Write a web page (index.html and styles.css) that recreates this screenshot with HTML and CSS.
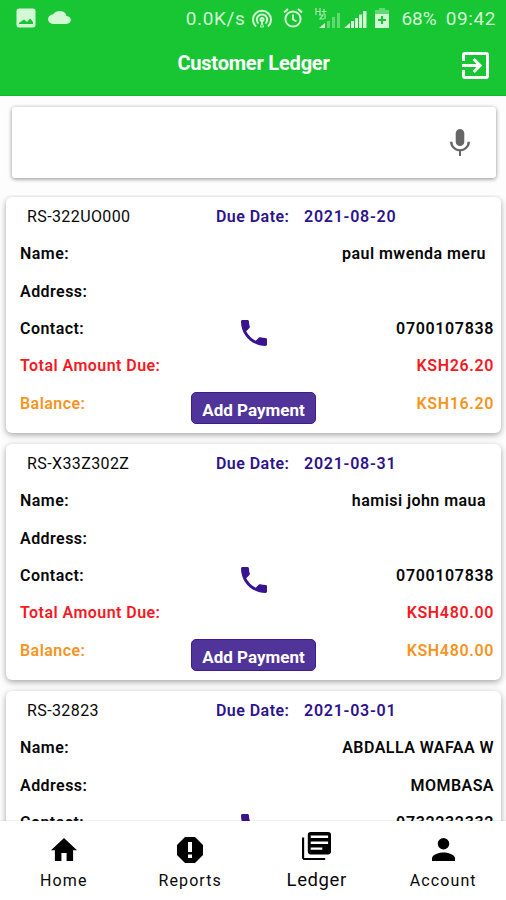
FILE: index.html
```html
<!DOCTYPE html>
<html lang="en">
<head>
    <meta charset="UTF-8">
    <meta name="viewport" content="width=device-width, initial-scale=1.0">
    <title>Customer Ledger</title>
    <link rel="stylesheet" href="styles.css">
</head>
<body>
    <header>
        <div class="status-bar">
            <svg class="picture" width="20" height="20" viewBox="0 0 20 20"><path fill-rule="evenodd" d="M3 .5h14a2.500 2.500 0 0 1 2.500 2.500v14a2.500 2.500 0 0 1-2.500 2.500H3A2.500 2.500 0 0 1 .5 17V3A2.500 2.500 0 0 1 3 .5zM3 16h14v-2l-3-3.500-3 3.500-3-2.500L3 15z"/></svg>
            <svg class="cloud" width="23" height="13" viewBox="0 0 24 16" preserveAspectRatio="none"><path d="M19.350 6.040A7.490 7.490 0 0 0 12 0C9.110 0 6.600 1.640 5.350 4.040A6 6 0 0 0 6 16h13a5 5 0 0 0 .35-9.960z"/></svg>
            <span class="speed">0.0K/s</span>
            <svg class="hotspot" width="22" height="20" viewBox="0 0 22 20" fill="none" stroke="#d2f8d4" stroke-width="2"><path d="M5 17.500a9 9 0 1 1 12 0M7.500 14.500a5.200 5.200 0 1 1 7 0"/><circle cx="11" cy="10.500" r="1.500"/><path d="M9.500 18l1.500-5 1.500 5z" stroke-width="1"/></svg>
            <svg class="alarm" width="20" height="20" viewBox="0 0 20 20" fill="none" stroke="#d2f8d4" stroke-width="2"><circle cx="10" cy="11" r="7.600"/><path d="M10 6.500v5l3.500 2M1 4.500L5 1M19 4.500L15 1"/></svg>
            <svg class="signal" width="52" height="22" viewBox="0 0 52 22">
                <path d="M1 1v7M5 1v7M1 4.500h4M6.500 4.500h5M9 2v5M4 8h4l-3 4h4M10 7v5" fill="none" stroke="#a5edaa" stroke-width="1.200"/>
                <path d="M4 21l6-5v5z"/>
                <path class="dim" d="M12 14h3v7h-3zM17 10h3v11h-3zM22 6h3v15h-3z"/>
                <path d="M29 21l6-5v5zM36 14h3v7h-3zM40 11h3v10h-3zM44 7.500h3V21h-3zM48 4h3.500v17H48z"/>
            </svg>
            <svg class="battery" width="14" height="20" viewBox="0 0 14 20"><path class="dim" d="M4 0h6v2h4v5H0V2h4z"/><path fill-rule="evenodd" d="M0 6h14v14H0zM6 8v3H3v2h3v3h2v-3h3v-2H8V8z"/></svg>
            <span class="percent">68%</span>
            <span>09:42</span>
        </div>
        <div class="title-bar">
            <h1>Customer Ledger</h1>
            <svg class="exit" width="27" height="27" viewBox="3 3 18 18"><path d="M10.090 15.590L11.500 17l5-5-5-5-1.410 1.410L12.670 11H3v2h9.670l-2.580 2.590zM19 3H5a2 2 0 0 0-2 2v4h2V5h14v14H5v-4H3v4a2 2 0 0 0 2 2h14a2 2 0 0 0 2-2V5a2 2 0 0 0-2-2z"/></svg>
        </div>
    </header>

    <div class="search">
        <svg width="20" height="27" viewBox="5 2 14 19" preserveAspectRatio="none"><path d="M12 14a3 3 0 0 0 3-3V5a3 3 0 0 0-6 0v6a3 3 0 0 0 3 3zM17.300 11a5.300 5.300 0 0 1-10.600 0H5c0 3.410 2.720 6.230 6.300 6.720V21h1.400v-3.280C16.280 17.230 19 14.410 19 11h-1.700z"/></svg>
    </div>

    <main id="ledger" class="ledger">
        <!-- Ledger cards are added here -->
    </main>

    <nav>
        <a class="tab">
            <svg width="26" height="23" viewBox="2 3 20 17" preserveAspectRatio="none"><path d="M10 20v-6h4v6h5v-8h3L12 3 2 12h3v8z"/></svg>
            <span>Home</span>
        </a>
        <a class="tab">
            <svg width="26" height="26" viewBox="0 0 26 26"><path fill-rule="evenodd" d="M8 0h10l8 8v10l-8 8H8l-8-8V8zM11 5v10h4V5zM11 17.500v3.500h4v-3.500z"/></svg>
            <span>Reports</span>
        </a>
        <a class="tab active">
            <svg width="29" height="28" viewBox="2 2 20 20" preserveAspectRatio="none"><path d="M3.500 6H2v14a2 2 0 0 0 2 2h14v-1.500H3.500z"/><path fill-rule="evenodd" d="M8 2h12a2 2 0 0 1 2 2v12a2 2 0 0 1-2 2H8a2 2 0 0 1-2-2V4a2 2 0 0 1 2-2zM8 4.500v1.700h12V4.500zM8 8.800v1.700h12V8.800zM8 13v1.700h8V13z"/></svg>
            <span>Ledger</span>
        </a>
        <a class="tab">
            <svg width="23" height="23" viewBox="4 4 16 16" preserveAspectRatio="none"><circle cx="12" cy="8" r="4"/><path d="M12 14c-2.670 0-8 1.340-8 4v2h16v-2c0-2.660-5.330-4-8-4z"/></svg>
            <span>Account</span>
        </a>
    </nav>

    <script>
        const customers = [
            { ref: "RS-322UO000", due: "2021-08-20", name: "paul mwenda meru", address: "", contact: "0700107838", total: "KSH26.20", balance: "KSH16.20" },
            { ref: "RS-X33Z302Z", due: "2021-08-31", name: "hamisi john maua", address: "", contact: "0700107838", total: "KSH480.00", balance: "KSH480.00" },
            { ref: "RS-32823", due: "2021-03-01", name: "ABDALLA WAFAA W", address: "MOMBASA", contact: "0732232332" }
        ];

        const ledger = document.getElementById("ledger");

        customers.forEach(customer => {
            const card = document.createElement("div");
            const nameClass = customer.name === customer.name.toLowerCase() ? "name padded" : "name";
            card.className = "card";
            card.innerHTML = `
                <div class="row top">
                    <span class="ref">${customer.ref}</span>
                    <span class="due">Due Date:</span>
                    <span class="due">${customer.due}</span>
                </div>
                <div class="row"><span>Name:</span><span class="${nameClass}">${customer.name}</span></div>
                <div class="row"><span>Address:</span><span class="address">${customer.address}</span></div>
                <div class="row">
                    <span>Contact:</span>
                    <svg class="phone" width="26" height="26" viewBox="3 3 18 18"><path d="M20 15.500c-1.250 0-2.450-.2-3.570-.57a1.020 1.020 0 0 0-1.020.24l-2.200 2.200a15.100 15.100 0 0 1-6.590-6.590l2.200-2.200c.28-.28.36-.67.25-1.020A11.400 11.400 0 0 1 8.500 4c0-.55-.45-1-1-1H4c-.55 0-1 .45-1 1 0 9.390 7.610 17 17 17 .55 0 1-.45 1-1v-3.500c0-.55-.45-1-1-1z"/></svg>
                    <span class="number">${customer.contact}</span>
                </div>
            `;
            if (customer.total) {
                card.innerHTML += `
                    <div class="row total"><span>Total Amount Due:</span><span class="number">${customer.total}</span></div>
                    <div class="row balance">
                        <span>Balance:</span>
                        <button>Add Payment</button>
                        <span class="number">${customer.balance}</span>
                    </div>
                `;
            }
            ledger.appendChild(card);
        });
    </script>
</body>
</html>
```
FILE: styles.css
```css
/* General Reset */
* {
    box-sizing: border-box;
}

body {
    font-family: Roboto, 'Liberation Sans', sans-serif;
    margin: 0;
    height: 900px;
    display: flex;
    flex-direction: column;
    overflow: hidden;
    background-color: #fdfdfd;
    color: #080808;
}

svg {
    flex: none;
}

header {
    height: 96px;
    flex: none;
    background-color: #18c634;
    border-bottom: 1px solid #10b82b;
    color: white;
}

.status-bar {
    display: flex;
    align-items: center;
    height: 37px;
    padding: 0 10px 0 16px;
    font-size: 19px;
    letter-spacing: 0.6px;
    color: #d2f8d4;
    fill: #d2f8d4;
}

.picture {
    margin-top: -2px;
}

.cloud {
    margin: -2px 0 0 12px;
}

.speed {
    margin-left: auto;
}

.hotspot {
    margin-left: 6px;
}

.alarm {
    margin: -1px 0 0 10px;
}

.signal {
    margin: -2px 0 0 12px;
}

.battery {
    margin: -1px 0 0 8px;
}

.dim {
    opacity: 0.4;
}

.percent {
    margin: 0 9px 0 12px;
    letter-spacing: 0;
}

.title-bar {
    display: grid;
    grid-template-columns: 1fr auto 1fr;
    align-items: center;
    height: 56px;
    padding-right: 17px;
}

.title-bar h1 {
    grid-column: 2;
    margin: 0 0 5px 18px;
    font-size: 20px;
    font-weight: bold;
    letter-spacing: -0.2px;
}

.exit {
    justify-self: end;
    fill: white;
}

.search {
    display: flex;
    flex: none;
    align-items: center;
    justify-content: flex-end;
    height: 71px;
    margin: 11px 10px 17px 12px;
    padding: 0 26px 1px 0;
    background: white;
    border-radius: 3px;
    box-shadow: 0 1px 4px rgba(0, 0, 0, 0.45);
    fill: #666;
}

.ledger {
    flex: 1;
    min-height: 0;
    padding: 2px 5px 0 6px;
    overflow: hidden;
}

.card {
    height: 236px;
    margin-bottom: 11px;
    padding: 1px 7px 0 14px;
    background: white;
    border-radius: 6px;
    box-shadow: 0 2px 6px rgba(0, 0, 0, 0.35);
}

.row {
    display: grid;
    grid-template-columns: 170px 127px 1fr;
    grid-template-rows: 100%;
    align-items: center;
    height: 37.300px;
    font-size: 16px;
    font-weight: 600;
    letter-spacing: 0.45px;
    white-space: nowrap;
}

.top {
    grid-template-columns: 189px 88px 1fr;
    padding-left: 7px;
}

.ref {
    font-weight: normal;
    letter-spacing: 0.4px;
}

.due {
    color: #2d138c;
}

.due:last-child {
    letter-spacing: 0.75px;
}

.name, .address, .number {
    grid-column: 3;
    justify-self: end;
}

.number {
    letter-spacing: 0.65px;
}

.padded {
    margin-right: 8px;
}

.phone {
    justify-self: center;
    margin-top: 9px;
    fill: #39148f;
}

.total {
    color: #f51a1f;
}

.balance {
    color: #f5941f;
}

.card button {
    justify-self: center;
    width: 125px;
    height: 32px;
    margin-top: 10px;
    padding: 3px 0 0;
    border: 1px solid #411b87;
    border-radius: 5px;
    background-color: #50349a;
    color: white;
    font-family: inherit;
    font-size: 17px;
    font-weight: bold;
}

nav {
    display: grid;
    grid-template-columns: repeat(4, 1fr);
    flex: none;
    height: 79px;
    background: white;
    box-shadow: 0 0 2px rgba(0, 0, 0, 0.15);
    position: relative;
}

.tab {
    display: flex;
    flex-direction: column;
    align-items: center;
    justify-content: flex-end;
    padding: 0 0 9px 1px;
    font-size: 16px;
    letter-spacing: 1.100px;
}

.tab span {
    margin-top: 10px;
    line-height: 20px;
}

.tab:nth-child(2) span {
    margin-top: 8px;
}

.active {
    padding-bottom: 10px;
    font-size: 18.500px;
    letter-spacing: 0.6px;
}
```
